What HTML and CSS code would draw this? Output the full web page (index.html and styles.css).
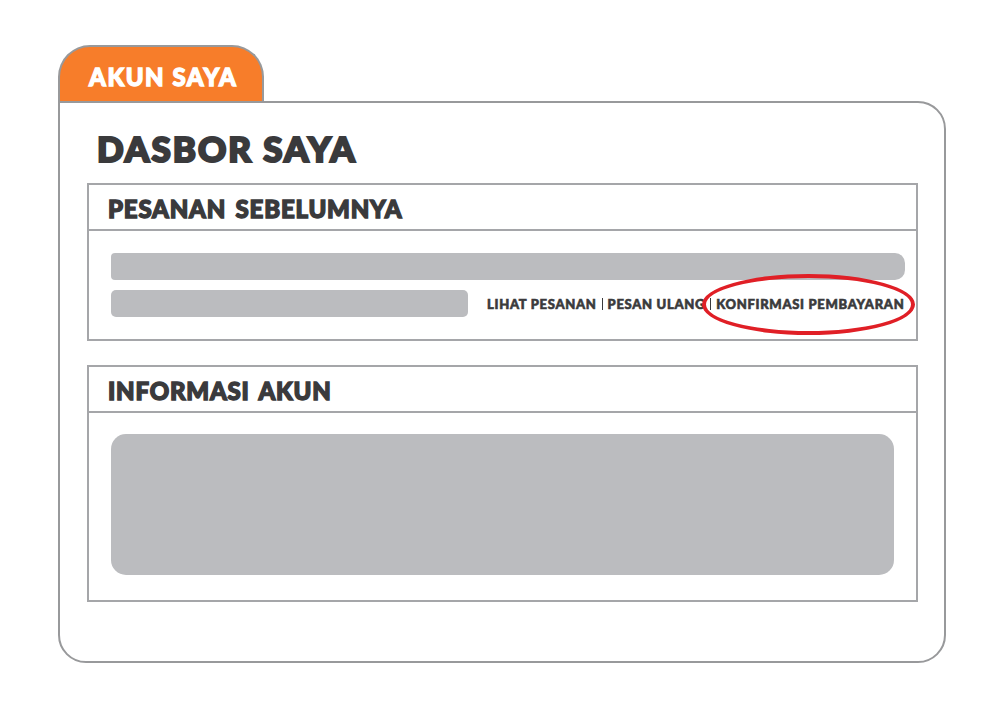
FILE: index.html
```html
<!DOCTYPE html>
<html lang="id">
<head>
    <meta charset="UTF-8">
    <title>Akun Saya</title>
    <link rel="stylesheet" href="styles.css">
</head>
<body>
    <div class="tab">AKUN SAYA</div>
    <div class="card">
        <h1 class="title">DASBOR SAYA</h1>

        <section class="box">
            <h2 class="box-head">PESANAN SEBELUMNYA</h2>
            <div class="orders">
                <div class="bar bar-wide"></div>
                <div class="order-row">
                    <div class="bar bar-short"></div>
                    <div class="links">
                        <span>LIHAT PESANAN</span>
                        <span class="sep"></span>
                        <span>PESAN ULANG</span>
                        <span class="sep"></span>
                        <span class="confirm">KONFIRMASI PEMBAYARAN
                            <span class="ring"></span>
                        </span>
                    </div>
                </div>
            </div>
        </section>

        <section class="box box-info">
            <h2 class="box-head">INFORMASI AKUN</h2>
            <div class="info">
                <div class="info-block"></div>
            </div>
        </section>
    </div>
</body>
</html>
```

FILE: styles.css
```css
body {
    margin: 0;
    padding: 45px 0 0 58px;
    background: #fff;
    font-family: Lato, "Open Sans", sans-serif;
    font-weight: 900;
    color: #3a3a3c;
}

.tab {
    box-sizing: border-box;
    width: 206px;
    height: 58px;
    padding: 15px 0 0 29px;
    background: #f77d2a;
    border: 2px solid #98999b;
    border-bottom: none;
    border-radius: 32px 32px 0 0;
    color: #fff;
    font-size: 24px;
    line-height: 30px;
    letter-spacing: 1.55px;
    -webkit-text-stroke: 1.3px #fff;
}

.card {
    box-sizing: border-box;
    width: 888px;
    height: 562px;
    margin-top: -2px;
    padding: 27px 26px 0 27px;
    border: 2px solid #98999b;
    border-radius: 0 28px 28px 28px;
}

.title {
    margin: -2px 0 15px 10px;
    font-size: 35px;
    line-height: 40px;
    font-weight: 900;
    letter-spacing: 2px;
    -webkit-text-stroke: 2.2px #3a3a3c;
}

.box {
    border: 2px solid #a5a6a9;
}

.box-info {
    margin-top: 24px;
}

.box-head {
    box-sizing: border-box;
    height: 46px;
    margin: 0;
    padding: 0 0 0 19px;
    border-bottom: 2px solid #a5a6a9;
    font-size: 24px;
    line-height: 47px;
    font-weight: 900;
    letter-spacing: 0.8px;
    word-spacing: 3px;
    -webkit-text-stroke: 1.4px #3a3a3c;
}

.orders {
    box-sizing: border-box;
    height: 108px;
    padding: 22px 0 0 22px;
}

.bar {
    height: 27px;
    background: #bbbcbf;
    border-radius: 5px;
}

.bar-wide {
    width: 794px;
    border-radius: 4px 10px 10px 4px;
}

.bar-short {
    width: 357px;
}

.order-row {
    display: flex;
    margin-top: 10px;
}

.links {
    display: flex;
    align-items: center;
    gap: 5px;
    height: 27px;
    margin: 0 0 0 19px;
    font-size: 13px;
    letter-spacing: 0.7px;
    white-space: nowrap;
    -webkit-text-stroke: 0.6px #3a3a3c;
}

.sep {
    width: 1px;
    height: 12px;
    background: #3a3a3c;
}

.confirm {
    position: relative;
}

/* red circle drawn over the link */
.ring {
    position: absolute;
    left: -14px;
    top: -22px;
    width: 213px;
    height: 61px;
    box-sizing: border-box;
    border: 4px solid #e01f26;
    border-radius: 50%;
}

.info {
    box-sizing: border-box;
    height: 187px;
    padding: 21px 0 0 22px;
}

.info-block {
    width: 783px;
    height: 141px;
    background: #bbbcbf;
    border-radius: 15px;
}
```
